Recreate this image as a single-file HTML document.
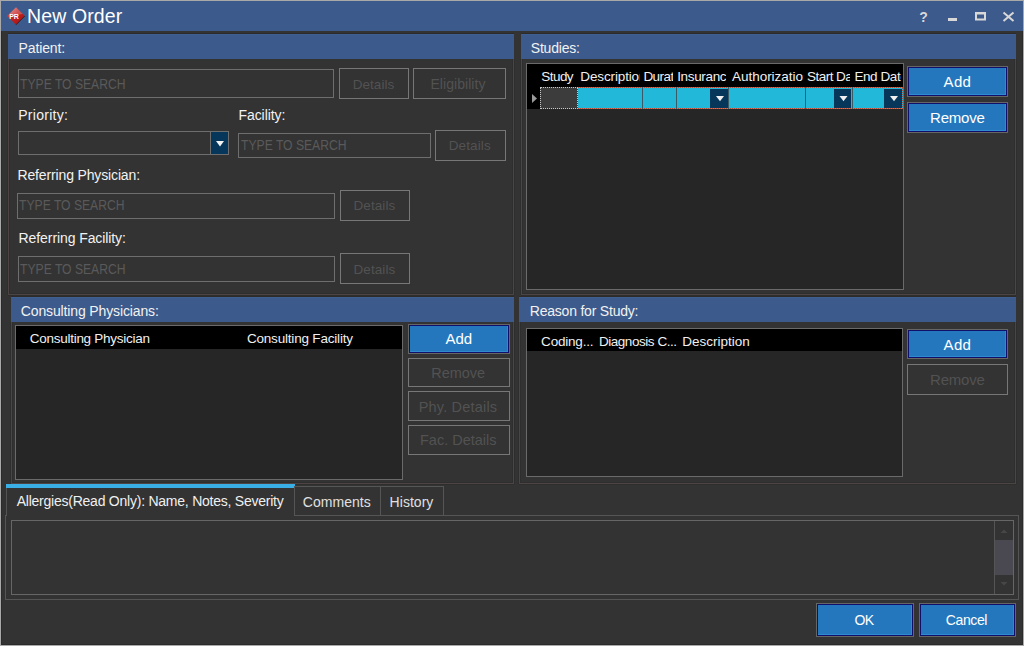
<!DOCTYPE html><html><head><meta charset="utf-8"><style>
html,body{margin:0;padding:0;width:1024px;height:646px;overflow:hidden;background:#333}
body>div,body>span,body>svg{position:absolute;box-sizing:border-box}
.t{position:absolute;white-space:nowrap;line-height:1;font-family:"Liberation Sans",sans-serif}
</style></head><body>
<div style="left:0px;top:0px;width:1024px;height:646px;background:#333333;border:1px solid #a9a9a9;"></div>
<div style="left:1px;top:1px;width:1022px;height:644px;border:1px solid #2b2b2b;"></div>
<div style="left:1px;top:1px;width:1022px;height:30px;background:#3c5a8b;"></div>
<svg style="left:6px;top:6px;width:20px;height:20px" viewBox="0 0 20 20"><defs><linearGradient id="g" x1="0" y1="0" x2="1" y2="1"><stop offset="0" stop-color="#e07a7a"/><stop offset="0.45" stop-color="#c42222"/><stop offset="1" stop-color="#a01010"/></linearGradient></defs><path d="M10 1.2 L18.8 10 L10 18.8 L1.2 10 Z" fill="url(#g)"/><path d="M10 1.2 L16.8 8 Q10 9.5 3.2 8 Z" fill="#fff" opacity="0.22"/><path d="M18.8 10 L10 18.8" stroke="#1a1a1a" stroke-width="0.9" opacity="0.8"/><text x="8" y="12.7" font-family="Liberation Sans" font-weight="bold" font-size="7" letter-spacing="-0.2" fill="#fff" text-anchor="middle">PR</text></svg>
<span class="t" style="left:27.00px;top:7px;font-size:19.5px;font-weight:normal;color:#ffffff;letter-spacing:0.125px;">New Order</span>
<svg style="left:900px;top:0px;width:124px;height:31px" viewBox="900 0 124 31"><text x="923.5" y="21.5" font-family="Liberation Sans" font-weight="bold" font-size="14" fill="#d8d8d8" text-anchor="middle">?</text><rect x="948" y="18" width="9" height="3" fill="#d8d8d8"/><rect x="976" y="13.5" width="9" height="6" fill="none" stroke="#d8d8d8" stroke-width="2"/><rect x="975" y="12" width="11" height="2" fill="#d8d8d8"/><path d="M1003.5 12.5 L1013.5 21 M1013.5 12.5 L1003.5 21" stroke="#d8d8d8" stroke-width="2"/></svg>
<div style="left:8px;top:33px;width:506px;height:1px;background:#2c2b29;"></div>
<div style="left:8px;top:34px;width:506px;height:25px;background:#3c5a8b;"></div>
<div style="left:8px;top:34px;width:506px;height:1px;background:#3f5f93;"></div>
<div style="left:8px;top:59px;width:506px;height:236px;background:#333333;border:1px solid #4d4444;border-top:none;box-shadow:-1px 0 0 #2e2e2e,1px 0 0 #2e2e2e,0 1px 0 #2e2e2e,inset 1px 0 0 #2e2e2e,inset -1px 0 0 #2e2e2e,inset 0 -1px 0 #2e2e2e;"></div>
<span class="t" style="left:18.60px;top:41px;font-size:14px;font-weight:normal;color:#f2f2f2;letter-spacing:-0.143px;">Patient:</span>
<div style="left:18px;top:69px;width:316px;height:29px;border:1px solid #6e6e6e;"></div>
<span class="t" style="left:20.00px;top:77px;font-size:14px;font-weight:normal;color:#5a5a5a;letter-spacing:0.000px;transform:scaleX(0.8678);transform-origin:0 0;">TYPE TO SEARCH</span>
<div style="left:339px;top:68px;width:70px;height:31px;border:1px solid #777777;background:#333333;"></div>
<span class="t" style="left:352.70px;top:78px;font-size:13.5px;font-weight:normal;color:#525252;letter-spacing:0.050px;">Details</span>
<div style="left:413px;top:68px;width:93px;height:31px;border:1px solid #777777;background:#333333;"></div>
<span class="t" style="left:430.40px;top:77px;font-size:14px;font-weight:normal;color:#525252;letter-spacing:0.060px;">Eligibility</span>
<span class="t" style="left:18.20px;top:108px;font-size:14px;font-weight:normal;color:#f2f2f2;letter-spacing:0.287px;">Priority:</span>
<div style="left:18px;top:131px;width:211px;height:24px;border:1px solid #6e6e6e;"></div>
<div style="left:210px;top:132px;width:1px;height:22px;background:#6e6e6e;"></div>
<div style="left:211px;top:132px;width:17px;height:22px;background:#06375a;"></div>
<svg style="left:214px;top:139px;width:12px;height:10px" viewBox="0 0 12 10"><path d="M2 2 L10 2 L6 7.5 Z" fill="#f4f4f4"/></svg>
<span class="t" style="left:238.50px;top:108px;font-size:14px;font-weight:normal;color:#f2f2f2;letter-spacing:-0.075px;">Facility:</span>
<div style="left:238px;top:133px;width:193px;height:25px;border:1px solid #6e6e6e;"></div>
<span class="t" style="left:240.50px;top:138px;font-size:14px;font-weight:normal;color:#5a5a5a;letter-spacing:0.000px;transform:scaleX(0.8678);transform-origin:0 0;">TYPE TO SEARCH</span>
<div style="left:435px;top:130px;width:71px;height:31px;border:1px solid #777777;background:#333333;"></div>
<span class="t" style="left:448.70px;top:139px;font-size:13.5px;font-weight:normal;color:#525252;letter-spacing:0.133px;">Details</span>
<span class="t" style="left:17.50px;top:168px;font-size:14px;font-weight:normal;color:#f2f2f2;letter-spacing:-0.145px;">Referring Physician:</span>
<div style="left:17px;top:193px;width:318px;height:26px;border:1px solid #6e6e6e;"></div>
<span class="t" style="left:19.00px;top:198px;font-size:14px;font-weight:normal;color:#5a5a5a;letter-spacing:0.000px;transform:scaleX(0.8678);transform-origin:0 0;">TYPE TO SEARCH</span>
<div style="left:340px;top:190px;width:70px;height:31px;border:1px solid #777777;background:#333333;"></div>
<span class="t" style="left:353.50px;top:199px;font-size:13.5px;font-weight:normal;color:#525252;letter-spacing:0.083px;">Details</span>
<span class="t" style="left:18.60px;top:231px;font-size:14px;font-weight:normal;color:#f2f2f2;letter-spacing:-0.089px;">Referring Facility:</span>
<div style="left:18px;top:256px;width:317px;height:26px;border:1px solid #6e6e6e;"></div>
<span class="t" style="left:20.00px;top:262px;font-size:14px;font-weight:normal;color:#5a5a5a;letter-spacing:0.000px;transform:scaleX(0.8678);transform-origin:0 0;">TYPE TO SEARCH</span>
<div style="left:340px;top:253px;width:70px;height:31px;border:1px solid #777777;background:#333333;"></div>
<span class="t" style="left:353.50px;top:263px;font-size:13.5px;font-weight:normal;color:#525252;letter-spacing:0.083px;">Details</span>
<div style="left:521px;top:33px;width:495px;height:1px;background:#2c2b29;"></div>
<div style="left:521px;top:34px;width:495px;height:25px;background:#3c5a8b;"></div>
<div style="left:521px;top:34px;width:495px;height:1px;background:#3f5f93;"></div>
<div style="left:521px;top:59px;width:495px;height:236px;background:#333333;border:1px solid #4d4444;border-top:none;box-shadow:-1px 0 0 #2e2e2e,1px 0 0 #2e2e2e,0 1px 0 #2e2e2e,inset 1px 0 0 #2e2e2e,inset -1px 0 0 #2e2e2e,inset 0 -1px 0 #2e2e2e;"></div>
<span class="t" style="left:530.80px;top:41px;font-size:14px;font-weight:normal;color:#f2f2f2;letter-spacing:-0.214px;">Studies:</span>
<div style="left:526px;top:63px;width:378px;height:227px;background:#262626;border:1px solid #6a6a6a;"></div>
<div style="left:527px;top:64px;width:376px;height:23px;background:#000;"></div>
<div style="left:527px;top:87px;width:13px;height:22px;background:#000;"></div>
<svg style="left:531px;top:93px;width:8px;height:12px" viewBox="0 0 8 12"><path d="M1 1 L6 5.5 L1 10 Z" fill="#9a9a9a"/></svg>
<div style="left:540px;top:87px;width:38px;height:22px;background:#3c3c3c;outline:1px dotted #c8c8c8;outline-offset:-1px;"></div>
<div style="left:578px;top:87px;width:325px;height:22px;background:#21b8da;border-top:1px dotted #b0503a;border-bottom:1px dotted #b0503a;"></div>
<div style="left:642px;top:87px;width:1px;height:22px;background:#3a5a66;"></div>
<div style="left:676px;top:87px;width:1px;height:22px;background:#3a5a66;"></div>
<div style="left:728px;top:87px;width:1px;height:22px;background:#3a5a66;"></div>
<div style="left:805px;top:87px;width:1px;height:22px;background:#3a5a66;"></div>
<div style="left:852px;top:87px;width:1px;height:22px;background:#3a5a66;"></div>
<div style="left:710px;top:89px;width:18px;height:19px;background:#06375a;"></div>
<svg style="left:714px;top:94px;width:12px;height:10px" viewBox="0 0 12 10"><path d="M2.00 2 L10.00 2 L6.00 7.2 Z" fill="#f0f0f0"/></svg>
<div style="left:834px;top:89px;width:17px;height:19px;background:#06375a;"></div>
<svg style="left:838px;top:94px;width:12px;height:10px" viewBox="0 0 12 10"><path d="M1.50 2 L9.50 2 L5.50 7.2 Z" fill="#f0f0f0"/></svg>
<div style="left:884px;top:89px;width:18px;height:19px;background:#06375a;"></div>
<svg style="left:888px;top:94px;width:12px;height:10px" viewBox="0 0 12 10"><path d="M2.00 2 L10.00 2 L6.00 7.2 Z" fill="#f0f0f0"/></svg>
<div style="left:902px;top:87px;width:1px;height:22px;border-right:1px dotted #b0503a;"></div>
<div style="left:540px;top:64px;width:38px;height:23px;overflow:hidden"><span class="t" style="left:1.25px;top:6px;font-size:13.5px;font-weight:normal;color:#f0f0f0;letter-spacing:-0.537px;">Study</span></div>
<div style="left:578px;top:64px;width:62px;height:23px;overflow:hidden"><span class="t" style="left:2.30px;top:6px;font-size:13.5px;font-weight:normal;color:#f0f0f0;letter-spacing:-0.133px;">Description</span></div>
<div style="left:643px;top:64px;width:30px;height:23px;overflow:hidden"><span class="t" style="left:0.40px;top:6px;font-size:13.5px;font-weight:normal;color:#f0f0f0;letter-spacing:-0.533px;">Duration</span></div>
<div style="left:677px;top:64px;width:49px;height:23px;overflow:hidden"><span class="t" style="left:0.20px;top:6px;font-size:13.5px;font-weight:normal;color:#f0f0f0;letter-spacing:-0.343px;">Insurance</span></div>
<div style="left:729px;top:64px;width:74px;height:23px;overflow:hidden"><span class="t" style="left:3.10px;top:6px;font-size:13.5px;font-weight:normal;color:#f0f0f0;letter-spacing:-0.045px;">Authorization</span></div>
<div style="left:806px;top:64px;width:44px;height:23px;overflow:hidden"><span class="t" style="left:1.10px;top:6px;font-size:13.5px;font-weight:normal;color:#f0f0f0;letter-spacing:-0.550px;">Start Date</span></div>
<div style="left:853px;top:64px;width:48px;height:23px;overflow:hidden"><span class="t" style="left:1.40px;top:6px;font-size:13.5px;font-weight:normal;color:#f0f0f0;letter-spacing:-0.417px;">End Date</span></div>
<div style="left:907px;top:66px;width:101px;height:31px;background:#2577bd;border:1px solid #666;box-shadow:inset 0 0 0 1px #10106a,inset -2px -2px 0 0 #2f8ad0;"></div>
<span class="t" style="left:943.60px;top:74px;font-size:15px;font-weight:normal;color:#fff;letter-spacing:0.300px;">Add</span>
<div style="left:907px;top:102px;width:101px;height:31px;background:#2577bd;border:1px solid #666;box-shadow:inset 0 0 0 1px #10106a,inset -2px -2px 0 0 #2f8ad0;"></div>
<span class="t" style="left:930.00px;top:110px;font-size:15px;font-weight:normal;color:#fff;letter-spacing:-0.200px;">Remove</span>
<div style="left:11px;top:296px;width:503px;height:1px;background:#2c2b29;"></div>
<div style="left:11px;top:297px;width:503px;height:25px;background:#3c5a8b;"></div>
<div style="left:11px;top:297px;width:503px;height:1px;background:#3f5f93;"></div>
<div style="left:11px;top:322px;width:503px;height:162px;background:#333333;border:1px solid #4d4444;border-top:none;box-shadow:-1px 0 0 #2e2e2e,1px 0 0 #2e2e2e,0 1px 0 #2e2e2e,inset 1px 0 0 #2e2e2e,inset -1px 0 0 #2e2e2e,inset 0 -1px 0 #2e2e2e;"></div>
<span class="t" style="left:20.80px;top:304px;font-size:14px;font-weight:normal;color:#f2f2f2;letter-spacing:-0.133px;">Consulting Physicians:</span>
<div style="left:15px;top:325px;width:388px;height:155px;background:#262626;border:1px solid #6a6a6a;"></div>
<div style="left:16px;top:326px;width:386px;height:23px;background:#000;"></div>
<span class="t" style="left:29.80px;top:332px;font-size:13.5px;font-weight:normal;color:#f0f0f0;letter-spacing:-0.274px;">Consulting Physician</span>
<span class="t" style="left:246.90px;top:332px;font-size:13.5px;font-weight:normal;color:#f0f0f0;letter-spacing:-0.189px;">Consulting Facility</span>
<div style="left:408px;top:324px;width:102px;height:30px;background:#2577bd;border:1px solid #666;box-shadow:inset 0 0 0 1px #10106a,inset -2px -2px 0 0 #2f8ad0;"></div>
<span class="t" style="left:445.50px;top:331px;font-size:15px;font-weight:normal;color:#fff;letter-spacing:-0.050px;">Add</span>
<div style="left:408px;top:358px;width:102px;height:29px;border:1px solid #777777;background:#333333;"></div>
<span class="t" style="left:431.25px;top:366px;font-size:14.5px;font-weight:normal;color:#525252;letter-spacing:-0.030px;">Remove</span>
<div style="left:408px;top:391px;width:102px;height:30px;border:1px solid #777777;background:#333333;"></div>
<span class="t" style="left:418.70px;top:400px;font-size:14.5px;font-weight:normal;color:#525252;letter-spacing:0.191px;">Phy. Details</span>
<div style="left:408px;top:425px;width:102px;height:30px;border:1px solid #777777;background:#333333;"></div>
<span class="t" style="left:420.00px;top:433px;font-size:14.5px;font-weight:normal;color:#525252;letter-spacing:0.000px;">Fac. Details</span>
<div style="left:519px;top:296px;width:497px;height:1px;background:#2c2b29;"></div>
<div style="left:519px;top:297px;width:497px;height:25px;background:#3c5a8b;"></div>
<div style="left:519px;top:297px;width:497px;height:1px;background:#3f5f93;"></div>
<div style="left:519px;top:322px;width:497px;height:162px;background:#333333;border:1px solid #4d4444;border-top:none;box-shadow:-1px 0 0 #2e2e2e,1px 0 0 #2e2e2e,0 1px 0 #2e2e2e,inset 1px 0 0 #2e2e2e,inset -1px 0 0 #2e2e2e,inset 0 -1px 0 #2e2e2e;"></div>
<span class="t" style="left:529.75px;top:304px;font-size:14px;font-weight:normal;color:#f2f2f2;letter-spacing:-0.209px;">Reason for Study:</span>
<div style="left:526px;top:328px;width:377px;height:149px;background:#262626;border:1px solid #6a6a6a;"></div>
<div style="left:527px;top:329px;width:375px;height:22px;background:#000;"></div>
<span class="t" style="left:541.10px;top:335px;font-size:13.5px;font-weight:normal;color:#f0f0f0;letter-spacing:-0.200px;">Coding...</span>
<span class="t" style="left:598.90px;top:335px;font-size:13.5px;font-weight:normal;color:#f0f0f0;letter-spacing:-0.454px;">Diagnosis C...</span>
<span class="t" style="left:682.30px;top:335px;font-size:13.5px;font-weight:normal;color:#f0f0f0;letter-spacing:0.000px;">Description</span>
<div style="left:907px;top:329px;width:101px;height:30px;background:#2577bd;border:1px solid #666;box-shadow:inset 0 0 0 1px #10106a,inset -2px -2px 0 0 #2f8ad0;"></div>
<span class="t" style="left:943.60px;top:337px;font-size:15px;font-weight:normal;color:#fff;letter-spacing:0.300px;">Add</span>
<div style="left:907px;top:364px;width:101px;height:31px;border:1px solid #777777;background:#333333;"></div>
<span class="t" style="left:930.00px;top:372px;font-size:15px;font-weight:normal;color:#525252;letter-spacing:-0.200px;">Remove</span>
<div style="left:5px;top:515px;width:1014px;height:85px;background:#333333;border:1px solid #555;"></div>
<div style="left:6px;top:484px;width:289px;height:32px;background:#333333;border-left:1px solid #555;"></div>
<div style="left:6px;top:484px;width:289px;height:4px;background:#3aafe6;"></div>
<span class="t" style="left:16.70px;top:494px;font-size:14px;font-weight:normal;color:#f0f0f0;letter-spacing:-0.236px;">Allergies(Read Only): Name, Notes, Severity</span>
<div style="left:294px;top:486px;width:87px;height:30px;background:#333333;border:1px solid #555;"></div>
<span class="t" style="left:302.80px;top:495px;font-size:14px;font-weight:normal;color:#e0e0e0;letter-spacing:0.029px;">Comments</span>
<div style="left:380px;top:486px;width:64px;height:30px;background:#333333;border:1px solid #555;"></div>
<span class="t" style="left:389.60px;top:495px;font-size:14px;font-weight:normal;color:#e0e0e0;letter-spacing:0.033px;">History</span>
<div style="left:11px;top:520px;width:1003px;height:75px;border:1px solid #666;"></div>
<div style="left:994px;top:521px;width:1px;height:73px;background:#555;"></div>
<div style="left:995px;top:540px;width:18px;height:35px;background:#4a4850;"></div>
<svg style="left:995px;top:521px;width:18px;height:73px" viewBox="0 0 18 73"><path d="M5.5 12 L9 8.5 L12.5 12 Z" fill="#474747"/><path d="M5.5 61 L9 64.5 L12.5 61 Z" fill="#474747"/></svg>
<div style="left:816px;top:603px;width:98px;height:34px;background:#2577bd;border:1px solid #666;box-shadow:inset 0 0 0 1px #10106a,inset -2px -2px 0 0 #2f8ad0;"></div>
<span class="t" style="left:854.50px;top:613px;font-size:14px;font-weight:normal;color:#fff;letter-spacing:-0.700px;">OK</span>
<div style="left:919px;top:603px;width:97px;height:34px;background:#2577bd;border:1px solid #666;box-shadow:inset 0 0 0 1px #10106a,inset -2px -2px 0 0 #2f8ad0;"></div>
<span class="t" style="left:945.80px;top:613px;font-size:14px;font-weight:normal;color:#fff;letter-spacing:-0.380px;">Cancel</span>
</body></html>
